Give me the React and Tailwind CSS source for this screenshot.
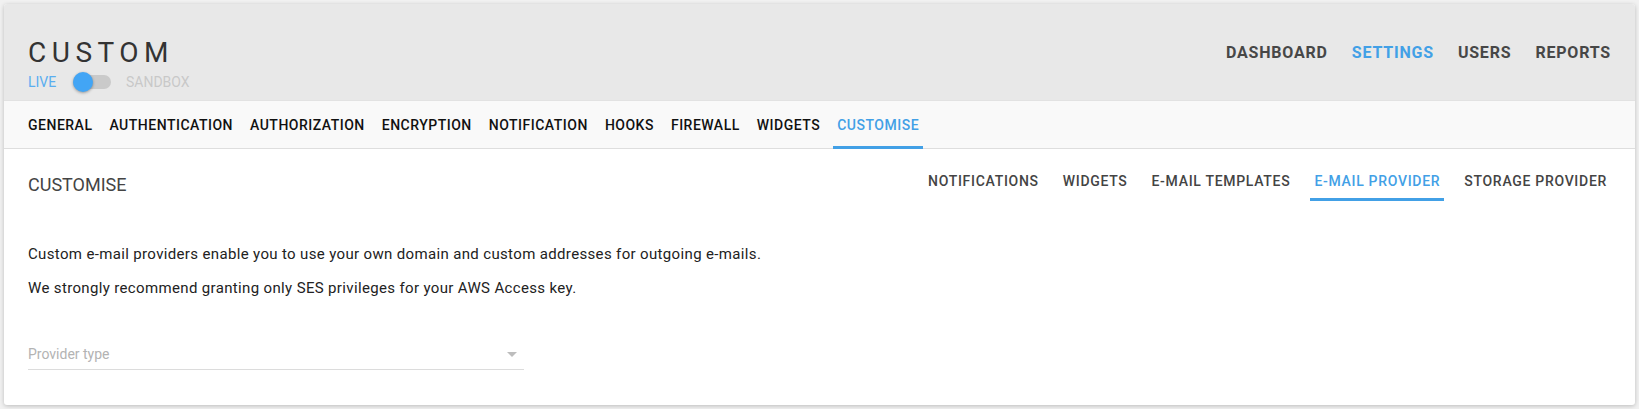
import React from "react";

const blue = "text-[#42a0e6]";

const mainTabs = [
    "General",
    "Authentication",
    "Authorization",
    "Encryption",
    "Notification",
    "Hooks",
    "Firewall",
    "Widgets",
    "Customise",
];

const subTabs = [
    "Notifications",
    "Widgets",
    "E-mail templates",
    "E-mail provider",
    "Storage provider",
];

const topNav = ["Dashboard", "Settings", "Users", "Reports"];

export default function App() {
    return (
        <div className="min-h-screen bg-[#f1f1f1] p-1 font-['Roboto',sans-serif]">
            <div className="bg-white rounded-[3px] shadow-[0_1px_4px_rgba(0,0,0,0.22)] overflow-hidden">
                {/* Header */}
                <div className="h-[96px] bg-[#e8e8e8] px-6 pt-[32px] flex justify-between items-start">
                    <div>
                        <h1 className="text-[28px] leading-[34px] font-normal tracking-[5.5px] text-[#333]">
                            CUSTOM
                        </h1>
                        <div className="mt-px h-[22px] flex items-center text-[14px] leading-5">
                            <span className="text-[#5aaef0] w-[45px]">LIVE</span>
                            <div className="relative w-[38px] h-[14px] rounded-full bg-[#cacaca]">
                                <div className="absolute left-0 top-1/2 -translate-y-1/2 w-5 h-5 rounded-full bg-[#42a5f5] shadow-[0_1px_3px_rgba(0,0,0,0.35)]"></div>
                            </div>
                            <span className="ml-[15px] text-[#c8c8c8]">SANDBOX</span>
                        </div>
                    </div>
                    <nav className="mt-[7px] flex gap-6 text-[16px] leading-5 font-bold tracking-[0.8px] uppercase">
                        {topNav.map((n) => (
                            <span
                                key={n}
                                className={n === "Settings" ? blue : "text-[#474747]"}
                            >
                                {n}
                            </span>
                        ))}
                    </nav>
                </div>

                {/* Main tabs */}
                <div className="h-[49px] bg-[#f9f9f9] border-t border-t-[#e2e2e2] border-b border-b-[#dedede] pl-5 flex gap-[9px] text-[14px] font-medium tracking-[0.5px] uppercase">
                    {mainTabs.map((t) => (
                        <div
                            key={t}
                            className={`relative px-1 pt-px h-full flex items-center ${
                                t === "Customise" ? blue : "text-[#111]"
                            }`}
                        >
                            {t}
                            {t === "Customise" && (
                                <div className="absolute left-0 right-0 -bottom-px h-[3px] bg-[#42a0e6]"></div>
                            )}
                        </div>
                    ))}
                </div>

                {/* Content */}
                <div className="px-6 pb-[35px]">
                    <div className="pt-[21px] flex justify-between items-start">
                        <h2 className="mt-[3px] text-[18px] leading-6 text-[#444]">
                            CUSTOMISE
                        </h2>
                        <div className="flex gap-4 text-[14px] leading-5 font-medium tracking-[0.7px] uppercase">
                            {subTabs.map((t) => (
                                <div
                                    key={t}
                                    className={`px-1 pt-px pb-[7px] border-b-[3px] ${
                                        t === "E-mail provider"
                                            ? "border-[#42a0e6] text-[#42a0e6]"
                                            : "border-transparent text-[#444]"
                                    }`}
                                >
                                    {t}
                                </div>
                            ))}
                        </div>
                    </div>

                    <div className="mt-[43px] text-[15px] leading-5 tracking-[0.35px] text-[#222] flex flex-col gap-[14px]">
                        <p>
                            Custom e-mail providers enable you to use your own domain and
                            custom addresses for outgoing e-mails.
                        </p>
                        <p>
                            We strongly recommend granting only SES privileges for your AWS
                            Access key.
                        </p>
                    </div>

                    <div className="mt-[46px] w-[496px] pb-[5px] border-b border-[#dcdcdc] flex items-center justify-between text-[14px] leading-5 text-[#b3b3b3]">
                        <span>Provider type</span>
                        <svg width="10" height="5" viewBox="0 0 10 5" className="mr-[7px]">
                            <path d="M0 0 L10 0 L5 5 Z" fill="#bdbdbd" />
                        </svg>
                    </div>
                </div>
            </div>
        </div>
    );
}
